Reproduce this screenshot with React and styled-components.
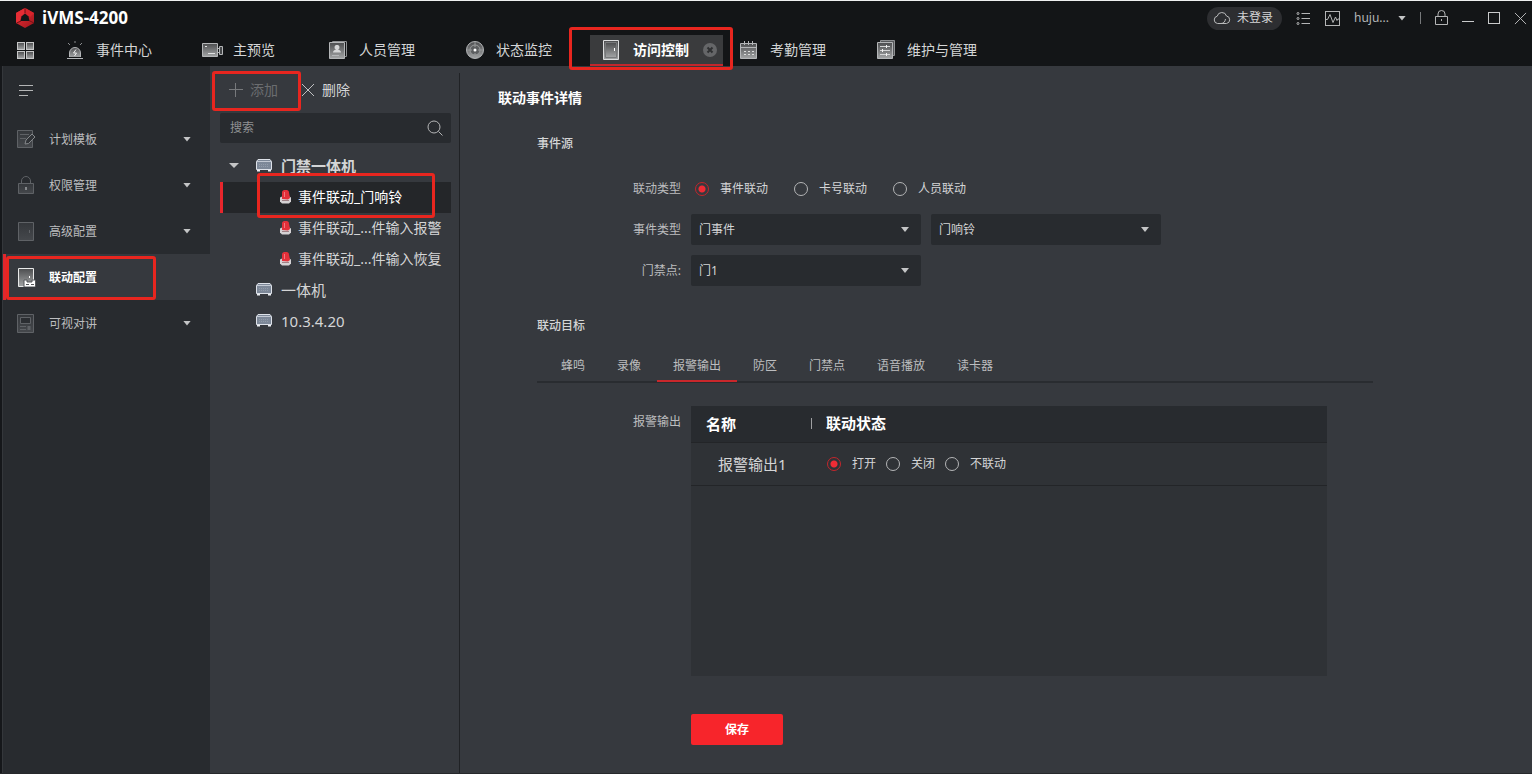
import React, { useState } from 'react'
import styled, { createGlobalStyle, css } from 'styled-components'

const navItems = [
  { label: '事件中心', icon: 'siren' },
  { label: '主预览', icon: 'camera', short: true },
  { label: '人员管理', icon: 'person' },
  { label: '状态监控', icon: 'radar' },
  { label: '访问控制', icon: 'door', active: true },
  { label: '考勤管理', icon: 'calendar' },
  { label: '维护与管理', icon: 'sliders' },
]

const menuItems = [
  { label: '计划模板', icon: 'template', children: true },
  { label: '权限管理', icon: 'padlock', children: true },
  { label: '高级配置', icon: 'panel', children: true },
  { label: '联动配置', icon: 'linkage', active: true },
  { label: '可视对讲', icon: 'intercom', children: true },
]

const treeRows = [
  { label: '门禁一体机', type: 'device', open: true },
  { label: '事件联动_门响铃', type: 'event', active: true },
  { label: '事件联动_...件输入报警', type: 'event' },
  { label: '事件联动_...件输入恢复', type: 'event' },
  { label: '一体机', type: 'device' },
  { label: '10.3.4.20', type: 'device' },
]

const targetTabs = [
  '蜂鸣',
  '录像',
  '报警输出',
  '防区',
  '门禁点',
  '语音播放',
  '读卡器',
]

const App = () => {
  const [linkType, setLinkType] = useState('事件联动')
  const [output, setOutput] = useState('打开')
  const [tab, setTab] = useState('报警输出')

  return (
    <Shell>
      <GlobalStyle />
      <Gradients />
      <Header>
        <TitleBar>
          <Logo />
          <Brand>iVMS-4200</Brand>
          <Tools>
            <LoginPill>
              <CloudIcon />
              未登录
            </LoginPill>
            <ToolButton aria-label="list">
              <ListIcon />
            </ToolButton>
            <ToolButton aria-label="monitor">
              <WaveIcon />
            </ToolButton>
            <UserButton>
              huju...
              <Caret />
            </UserButton>
            <ToolDivider />
            <ToolButton aria-label="lock">
              <LockIcon />
            </ToolButton>
            <ToolButton aria-label="minimize">
              <MinimizeIcon />
            </ToolButton>
            <ToolButton aria-label="maximize">
              <MaximizeIcon />
            </ToolButton>
            <ToolButton aria-label="close">
              <CrossIcon size={13} />
            </ToolButton>
          </Tools>
        </TitleBar>
        <Nav>
          <GridButton aria-label="modules">
            <GridIcon />
          </GridButton>
          {navItems.map(item => (
            <NavItem key={item.label} $active={item.active} $short={item.short}>
              <NavLink href="#" $active={item.active}>
                <NavIcon name={item.icon} />
                {item.label}
              </NavLink>
              {item.active && (
                <>
                  <CloseTab aria-label="close tab">
                    <CloseTabIcon />
                  </CloseTab>
                  <Highlight $top={-8} $left={-21} $right={-10} $bottom={-6} />
                </>
              )}
            </NavItem>
          ))}
        </Nav>
      </Header>

      <Body>
        <Sidebar>
          <Fold aria-label="fold menu">
            <FoldIcon />
          </Fold>
          {menuItems.map(item => (
            <MenuLink href="#" key={item.label} $active={item.active}>
              <MenuIcon name={item.icon} />
              <MenuLabel>{item.label}</MenuLabel>
              {item.children && <Caret />}
              {item.active && (
                <Highlight $top={2} $left={0} $right={54} $bottom={0} />
              )}
            </MenuLink>
          ))}
        </Sidebar>

        <TreePanel>
          <Toolbar>
            <ToolbarButton disabled>
              <PlusIcon />
              添加
              <Highlight $top={-2} $left={-17} $right={-23} $bottom={-4} />
            </ToolbarButton>
            <ToolbarButton>
              <CrossIcon size={14} />
              删除
            </ToolbarButton>
          </Toolbar>
          <Search>
            <SearchInput placeholder="搜索" aria-label="搜索" />
            <SearchIcon />
          </Search>
          <Tree>
            {treeRows.map(row => (
              <TreeRow
                key={row.label}
                $active={row.active}
                $open={row.open}
                $leaf={row.type === 'event'}
              >
                <Arrow $leaf={row.type === 'event'}>
                  {row.open && <Caret $wide />}
                </Arrow>
                {row.type === 'device' ? <DeviceIcon /> : <EventIcon />}
                {row.label}
                {row.active && (
                  <Highlight $top={-9} $left={34} $right={16} $bottom={-5} />
                )}
              </TreeRow>
            ))}
          </Tree>
        </TreePanel>

        <Detail>
          <Title>联动事件详情</Title>
          <Form onSubmit={e => e.preventDefault()}>
            <Heading>事件源</Heading>
            <Fields>
              <Field>
                <Label as="span">联动类型</Label>
                <Radios $inset>
                  {['事件联动', '卡号联动', '人员联动'].map(name => (
                    <RadioLabel key={name}>
                      <Radio
                        name="linkType"
                        checked={linkType === name}
                        onChange={() => setLinkType(name)}
                      />
                      {name}
                    </RadioLabel>
                  ))}
                </Radios>
              </Field>
              <Field>
                <Label htmlFor="eventType">事件类型</Label>
                <Controls>
                  <Dropdown id="eventType" options={['门事件']} />
                  <Dropdown aria-label="事件" options={['门响铃']} />
                </Controls>
              </Field>
              <Field>
                <Label htmlFor="door">门禁点:</Label>
                <Controls>
                  <Dropdown id="door" options={['门1']} />
                </Controls>
              </Field>
            </Fields>

            <Heading $target>联动目标</Heading>
            <Tabs role="tablist">
              {targetTabs.map(name => (
                <Tab
                  type="button"
                  role="tab"
                  key={name}
                  aria-selected={tab === name}
                  $active={tab === name}
                  onClick={() => setTab(name)}
                >
                  {name}
                </Tab>
              ))}
            </Tabs>

            <Field $top>
              <Label as="span">报警输出</Label>
              <TableBox>
                <Table>
                  <thead>
                    <tr>
                      <NameHead>名称</NameHead>
                      <StateHead>
                        <span>联动状态</span>
                      </StateHead>
                    </tr>
                  </thead>
                  <tbody>
                    <tr>
                      <NameCell>报警输出1</NameCell>
                      <StateCell>
                        <Radios>
                          {['打开', '关闭', '不联动'].map(name => (
                            <RadioLabel key={name}>
                              <Radio
                                name="output"
                                checked={output === name}
                                onChange={() => setOutput(name)}
                              />
                              {name}
                            </RadioLabel>
                          ))}
                        </Radios>
                      </StateCell>
                    </tr>
                  </tbody>
                </Table>
              </TableBox>
            </Field>
            <Field>
              <span />
              <Save type="submit">保存</Save>
            </Field>
          </Form>
        </Detail>
      </Body>
    </Shell>
  )
}

export default App

const Dropdown = ({ options, ...rest }) => (
  <SelectBox>
    <Select {...rest}>
      {options.map(option => (
        <option key={option}>{option}</option>
      ))}
    </Select>
    <Caret />
  </SelectBox>
)

/* icons */

const Gradients = () => (
  <HiddenSvg aria-hidden="true">
    <defs>
      <linearGradient id="metal" x1="0" y1="0" x2="0" y2="1">
        <stop offset="0" stopColor="#4c4d4f" />
        <stop offset="1" stopColor="#a3a5a6" />
      </linearGradient>
      <linearGradient id="dim" x1="0" y1="0" x2="0" y2="1">
        <stop offset="0" stopColor="#34373b" />
        <stop offset="1" stopColor="#45484c" />
      </linearGradient>
      <linearGradient id="ruby" x1="0" y1="0" x2="1" y2="1">
        <stop offset="0" stopColor="#ee3038" />
        <stop offset="1" stopColor="#a0161c" />
      </linearGradient>
    </defs>
  </HiddenSvg>
)

const Logo = () => (
  <svg width="20" height="22" viewBox="0 0 20 22">
    <path d="M10 1 19 6v10l-9 5-9-5V6z" fill="url(#ruby)" />
    <path d="M10 1 19 6l-4 4-5-4z" fill="#d9242c" />
    <path d="M1 6l9-5v5l-4 3-1 5-4 2z" fill="#e62d35" />
    <path d="M10 6.500 13.500 9.500 14.500 14H5.500L6.500 9.500z" fill="#141618" />
    <path d="M10 1v5M19 16l-5-2.500M1.500 16l4.500-2" stroke="#6d1216" />
  </svg>
)

const CloudIcon = () => (
  <svg width="18" height="14" viewBox="0 0 18 14" fill="none" stroke="#b9babb">
    <path d="M4.500 12.500a3.700 3.700 0 0 1-.3-7.300A4.800 4.800 0 0 1 13.500 5a3.800 3.800 0 0 1 0 7.500H4.500" />
    <path d="M8 12.500c3 0 4-2 4.500-4.500" />
  </svg>
)

const ListIcon = () => (
  <svg width="15" height="15" viewBox="0 0 15 15" fill="none" stroke="#b4b5b6">
    <circle cx="2" cy="2.500" r="1" />
    <circle cx="2" cy="7.500" r="1" />
    <circle cx="2" cy="12.500" r="1" />
    <path d="M5.500 2.500H14M5.500 7.500H14M5.500 12.500H14" />
  </svg>
)

const WaveIcon = () => (
  <svg width="15" height="15" viewBox="0 0 15 15" fill="none" stroke="#b4b5b6">
    <rect x=".5" y=".5" width="14" height="14" />
    <path d="M1 8.500h1.500L5 3.500l3 8 2.500-5.500 1.500 3.500 1-1.500H14" />
  </svg>
)

const LockIcon = () => (
  <svg width="13" height="16" viewBox="0 0 13 16" fill="none" stroke="#b4b5b6">
    <path d="M.5 6.500h12v8H.5zM3 6.500V4a3.500 3.500 0 0 1 7 0v2.500M6.500 9v2" />
  </svg>
)

const MinimizeIcon = () => (
  <svg width="12" height="12" viewBox="0 0 12 12" stroke="#c9cacb">
    <path d="M0 9.500h12" />
  </svg>
)

const MaximizeIcon = () => (
  <svg width="12" height="12" viewBox="0 0 12 12" fill="none" stroke="#c9cacb">
    <rect x=".5" y=".5" width="11" height="11" />
  </svg>
)

const CrossIcon = ({ size }) => (
  <svg width={size} height={size} viewBox="0 0 14 14" stroke="#c0c1c2">
    <path d="M1 1l12 12M13 1 1 13" />
  </svg>
)

const PlusIcon = () => (
  <svg width="14" height="14" viewBox="0 0 14 14" stroke="#77797c">
    <path d="M0 6.500h14M6.500 0v14" />
  </svg>
)

const FoldIcon = () => (
  <svg width="15" height="12" viewBox="0 0 15 12" stroke="#b4b5b6">
    <path d="M0 .5h14M0 5.500h14M0 10.500h9" />
  </svg>
)

const SearchIcon = () => (
  <svg width="16" height="16" viewBox="0 0 16 16" fill="none" stroke="#b4b5b6">
    <circle cx="7" cy="7" r="6" />
    <path d="M11.500 11.500 15.500 15.500" />
  </svg>
)

const GridIcon = () => (
  <svg width="18" height="18" viewBox="0 0 18 18" fill="url(#metal)" stroke="#c6c7c8">
    <rect x="1.500" y=".5" width="7" height="7" />
    <rect x="10.500" y=".5" width="7" height="7" />
    <rect x="1.500" y="9.500" width="7" height="7" />
    <rect x="10.500" y="9.500" width="7" height="7" />
  </svg>
)

const CloseTabIcon = () => (
  <svg width="14" height="14" viewBox="0 0 14 14">
    <circle cx="7" cy="7" r="7" fill="#656668" />
    <path d="M4.500 4.500l5 5M9.500 4.500l-5 5" stroke="#2f3032" strokeWidth="2" />
  </svg>
)

const DeviceIcon = () => (
  <svg width="16" height="13" viewBox="0 0 16 13">
    <path d="M2 .5h12l1.500 2v8H.5v-8z" fill="#7d8898" stroke="#dde1e8" />
    <path d="M1 2.500h14" stroke="#c3c9d3" />
    <path d="M3 5.500h10M3 7.500h10" stroke="#929caa" strokeDasharray="1 1" />
    <path d="M1 11h3v1.500H1zM12 11h3v1.500h-3z" fill="#eceff3" />
  </svg>
)

const EventIcon = () => (
  <svg width="13" height="15" viewBox="0 0 13 15">
    <path d="M1 8.500 3 7.500h7l2 1v4L10 14.500H3l-2-2z" fill="#d5d2d4" />
    <path d="M3 10V3.500C3 1.500 4.500 1 6.500 1S10 1.500 10 3.500L11 9 9 10.500z" fill="#e2303a" />
    <path d="M5.500 8V3" stroke="#f0777d" />
    <path d="M3 11.500h7" stroke="#9d7f84" />
  </svg>
)

const navShapes = {
  siren: (
    <>
      <path d="M4.500 17v-4a5.500 5.500 0 0 1 11 0v4" />
      <path d="M2 18.500h16" />
      <path d="M10 1v2M3 3l2 2M17 3l-2 2" fill="none" stroke="#8a8c8e" />
      <path d="M11 9.500 8.500 13h3L9.500 16" fill="none" stroke="#ececec" />
    </>
  ),
  camera: (
    <>
      <path d="M.5 3.500h15v13H.5z" />
      <path d="M17.500 6.500h3v8h-3z" fill="#46484a" />
      <path d="M15.500 8.500h2M15.500 12.500h2" />
      <path d="M3 6.500h2M6 13.500h7" fill="none" stroke="#e0e1e2" />
    </>
  ),
  person: (
    <>
      <path d="M4.500 2.500v-1h14v15h-2" fill="none" stroke="#8d8f91" />
      <path d="M1.500 2.500h15v16h-15z" />
      <path d="M9 5a2 2.300 0 0 1 1 4.500c2 .5 3 1.500 3 3H5c0-1.500 1-2.500 3-3A2 2.300 0 0 1 9 5z" fill="#d5d6d7" stroke="none" />
      <path d="M4 15.500h7" />
    </>
  ),
  radar: (
    <>
      <circle cx="10" cy="10" r="8.500" />
      <circle cx="10" cy="10" r="5" fill="#5c5e60" stroke="#97999a" />
      <path d="M10 1.500V7M10 13v5.500M1.500 10H7M13 10h5.500" stroke="#97999a" />
      <circle cx="10" cy="10" r="1.500" fill="#fff" stroke="none" />
    </>
  ),
  door: (
    <>
      <path d="M1.500.5h15v19h-15z" stroke="#dcddde" />
      <path d="M3.500 2.500h11v15h-11z" stroke="#77797b" />
      <path d="M12.500 8v3" stroke="#fff" />
    </>
  ),
  calendar: (
    <>
      <path d="M1.500 3.500h16v15h-16z" />
      <path d="M1.500 7.500h16M5.500 1v4M9.500 1v4M13.500 1v4" />
      <path d="M5 11.500h10M5 14.500h10" stroke="#dcdddd" strokeDasharray="2 2" />
    </>
  ),
  sliders: (
    <>
      <path d="M4.500 2.500v-2h14v15h-2" fill="#55575a" stroke="#8d8f91" />
      <path d="M1.500 2.500h15v16h-15z" />
      <path d="M4 6.500h10M4 10.500h10M4 14.500h10" stroke="#d3d4d5" />
      <path d="M10.500 5v3M6.500 9v3M10.500 13v3" stroke="#f2f2f2" />
    </>
  ),
}

const NavIcon = ({ name }) => (
  <svg
    width="20"
    height="20"
    viewBox="0 0 20 20"
    overflow="visible"
    fill="url(#metal)"
    stroke="#b4b6b8"
  >
    {navShapes[name]}
  </svg>
)

const menuShapes = {
  template: (
    <>
      <path d="M.5.5h15v17H.5z" />
      <path d="M3 4.500h9M3 8.500h6" />
      <path d="M8 14l1-4 6-6 3 3-6.500 6.500z" fill="#303337" stroke="#85888b" />
    </>
  ),
  padlock: (
    <>
      <path d="M1.500 7.500h15v10h-15z" />
      <path d="M4.500 7.500V5a4.500 4.500 0 0 1 9 0v2.500" fill="none" />
      <path d="M9 11v3" stroke="#85888b" strokeWidth="2" />
    </>
  ),
  panel: (
    <>
      <path d="M1.500.5h15v18h-15z" />
      <path d="M12.500 8v3" />
    </>
  ),
  linkage: (
    <>
      <path d="M1.500.5h15v18h-15z" fill="url(#metal)" stroke="#e9eaea" />
      <path d="M12.500 8v2" stroke="#fff" />
      <path d="M7 19v-7h3v2h5v-2h3.500v7z" fill="#fff" stroke="#55575a" />
      <path d="M9 16.500h3M14 16.500h3" stroke="#55575a" />
    </>
  ),
  intercom: (
    <>
      <path d="M.5.500h16v18H.5z" />
      <path d="M3.500 3.500h10v6h-10z" fill="#2b2e32" />
      <path d="M3 12.500h6M3 15.500h6" />
      <path d="M12 12v4" strokeWidth="3" />
    </>
  ),
}

const MenuIcon = ({ name }) => (
  <svg width="19" height="19" viewBox="0 0 19 19" fill="url(#dim)" stroke="#5f6266">
    {menuShapes[name]}
  </svg>
)

/* styles */

const GlobalStyle = createGlobalStyle`
  *, *::before, *::after {
    box-sizing: border-box;
  }

  body {
    margin: 0;
    background: #36393e;
    color: #d4d5d6;
    font: 12px/20px "Noto Sans", "Noto Sans CJK SC", sans-serif;
  }

  button, input, select {
    font: inherit;
    color: inherit;
  }

  button {
    padding: 0;
    border: 0;
    background: none;
  }

  a {
    color: inherit;
    text-decoration: none;
  }

  svg {
    display: block;
    flex: none;
  }
`

const HiddenSvg = styled.svg`
  position: absolute;
  width: 0;
  height: 0;
`

const Shell = styled.div`
  display: flex;
  flex-direction: column;
  min-height: 100vh;
  border-top: 1px solid #eef0f0;
  border-bottom: 1px solid #26282b;
`

// red frame drawn round the part that the guide points at
const Highlight = styled.span`
  position: absolute;
  z-index: 2;
  top: ${p => p.$top}px;
  right: ${p => p.$right}px;
  bottom: ${p => p.$bottom}px;
  left: ${p => p.$left}px;
  border: 3px solid #e8261f;
  border-radius: 3px;
  pointer-events: none;
`

const Caret = styled.span`
  flex: none;
  width: ${p => (p.$wide ? 10 : 8)}px;
  height: 5px;
  background: #c4c5c6;
  clip-path: polygon(0 0, 100% 0, 50% 100%);
`

const Header = styled.header`
  background: #131517;
`

const TitleBar = styled.div`
  display: flex;
  align-items: center;
  height: 34px;
  padding: 0 5px 0 15px;
`

const Brand = styled.h1`
  margin: 0 0 0 7px;
  color: #fff;
  font: 700 17px/22px 'Open Sans', sans-serif;
`

const Tools = styled.div`
  display: flex;
  align-items: center;
  gap: 14px;
  margin-left: auto;
`

const LoginPill = styled.button`
  display: flex;
  align-items: center;
  gap: 6px;
  height: 23px;
  padding: 0 9px 0 6px;
  border-radius: 12px;
  background: #2d2e31;
`

const ToolButton = styled.button`
  display: block;
`

const UserButton = styled.button`
  display: flex;
  align-items: center;
  gap: 9px;
  color: #b4b5b6;
`

const ToolDivider = styled.span`
  width: 1px;
  height: 12px;
  background: #77797b;
`

const Nav = styled.nav`
  display: flex;
  gap: 4px;
  height: 31px;
  padding-left: 16px;
`

const GridButton = styled.button`
  width: 33px;
`

const NavItem = styled.div`
  position: relative;
  display: flex;
  align-items: center;
  justify-content: space-between;
  min-width: ${p => (p.$short ? 122 : 133)}px;
  padding: 0 6px 0 12px;
  border-bottom: 2px solid transparent;

  ${p =>
    p.$active &&
    css`
      border-color: #c3262c;
      background: #3a3b3d;
    `}
`

const NavLink = styled.a`
  display: flex;
  align-items: center;
  gap: 11px;
  font-size: 14px;
  font-weight: ${p => (p.$active ? 600 : 400)};
  color: ${p => (p.$active ? '#fff' : '#d4d5d6')};
  white-space: nowrap;
`

const CloseTab = styled.button`
  flex: none;
`

const Body = styled.div`
  display: grid;
  flex: 1;
  grid-template-columns: 208px 250px 1fr;
  border-left: 2px solid #15171a;
`

const Sidebar = styled.aside`
  border-left: 1px solid #34373b;
  background: #282b2f;
`

const Fold = styled.button`
  display: flex;
  align-items: center;
  height: 50px;
  padding-left: 16px;
`

const MenuLink = styled.a`
  position: relative;
  display: flex;
  align-items: center;
  gap: 13px;
  height: 46px;
  padding: 0 19px 0 11px;
  border-left: 3px solid ${p => (p.$active ? '#e0272d' : 'transparent')};
  background: ${p => (p.$active ? '#36393e' : 'none')};
  color: ${p => (p.$active ? '#fff' : '#bcbdbf')};
  font-weight: ${p => (p.$active ? 700 : 400)};
`

const MenuLabel = styled.span`
  flex: 1;
  padding-top: 2px;
`

const TreePanel = styled.section`
  margin-top: 7px;
  padding: 0 8px 0 10px;
  border-right: 1px solid #202225;
`

const Toolbar = styled.div`
  display: flex;
  gap: 23px;
  height: 34px;
  margin-bottom: 6px;
  padding-left: 9px;
`

const ToolbarButton = styled.button`
  position: relative;
  display: flex;
  align-items: center;
  gap: 7px;
  color: #d4d5d6;
  font-size: 14px;

  &:disabled {
    color: #6b6d70;
  }
`

const Search = styled.div`
  display: flex;
  align-items: center;
  height: 30px;
  margin-bottom: 8px;
  padding: 0 8px 0 10px;
  border-radius: 2px;
  background: #282b2f;
`

const SearchInput = styled.input`
  flex: 1;
  min-width: 0;
  padding: 0;
  border: 0;
  outline: 0;
  background: none;

  &::placeholder {
    color: #8f9193;
  }
`

const Tree = styled.ul`
  margin: 0;
  padding: 0;
  list-style: none;
`

const TreeRow = styled.li`
  position: relative;
  display: flex;
  align-items: center;
  gap: ${p => (p.$leaf ? 6 : 9)}px;
  height: 31px;
  padding-bottom: 2px;
  border-left: 3px solid ${p => (p.$active ? '#e8262c' : 'transparent')};
  background: ${p => (p.$active ? '#242629' : 'none')};
  color: ${p => (p.$active ? '#fff' : '#d4d5d6')};
  font-size: ${p => (p.$leaf ? 14 : 15)}px;
  font-weight: ${p => (p.$open ? 600 : 400)};
  white-space: nowrap;
`

const Arrow = styled.span`
  display: flex;
  flex: none;
  width: ${p => (p.$leaf ? 50 : 24)}px;
  padding-left: 6px;
`

const Detail = styled.main`
  padding: 21px 38px 28px;
`

const Title = styled.h2`
  margin: 0;
  color: #fff;
  font-size: 14px;
  font-weight: 600;
  line-height: 22px;
`

const Form = styled.form`
  max-width: 875px;
  padding: 25px 0 0 39px;
`

const Heading = styled.h3`
  margin: ${p => (p.$target ? '30px 0 15px' : '0 0 19px')};
  font-size: 12px;
  font-weight: 500;
  line-height: 20px;
`

const Fields = styled.div`
  display: grid;
  gap: 10px;
`

const Field = styled.div`
  display: grid;
  grid-template-columns: 144px 1fr;
  column-gap: 10px;
  align-items: ${p => (p.$top ? 'start' : 'center')};
  min-height: 31px;
  margin: ${p => (p.$top ? '23px 0 38px' : 0)};
`

const Label = styled.label`
  padding: 6px 0;
  color: #bcbdbf;
  line-height: 19px;
  text-align: right;
`

const Radios = styled.div`
  display: flex;
  gap: ${p => (p.$inset ? 26 : 10)}px;
  padding-left: ${p => (p.$inset ? 4 : 0)}px;
`

const RadioLabel = styled.label`
  display: flex;
  align-items: center;
  gap: 11px;
`

const Radio = styled.input.attrs({ type: 'radio' })`
  appearance: none;
  width: 14px;
  height: 14px;
  margin: 0;
  border: 1px solid #b4b5b6;
  border-radius: 50%;

  &:checked {
    border-color: #c3262c;
    background: radial-gradient(circle, #ee2c35 3px, transparent 4px);
  }
`

const Controls = styled.div`
  display: flex;
  gap: 10px;
`

const SelectBox = styled.div`
  display: grid;
  flex: 0 1 230px;
  align-items: center;

  > * {
    grid-area: 1 / 1;
  }

  ${Caret} {
    justify-self: end;
    margin-right: 12px;
    pointer-events: none;
  }
`

const Select = styled.select`
  appearance: none;
  width: 100%;
  height: 31px;
  padding: 0 28px 0 8px;
  border: 0;
  border-radius: 2px;
  background: #282b2f;
`

const Tabs = styled.div`
  display: flex;
  padding-left: 8px;
  border-bottom: 2px solid #292c30;
`

const Tab = styled.button`
  height: 31px;
  margin-bottom: -1px;
  padding: 0 16px;
  border-bottom: 2px solid ${p => (p.$active ? '#c9272b' : 'transparent')};
  color: #bcbdbf;
`

const TableBox = styled.div`
  min-height: 270px;
  margin-right: 46px;
  background: #2f3236;
`

const Table = styled.table`
  width: 100%;
  border-collapse: collapse;
  table-layout: fixed;
  font-size: 15px;
  text-align: left;

  tr {
    border-bottom: 1px solid #232528;
  }

  th {
    height: 36px;
    background: #282b2f;
    color: #fff;
    font-weight: 600;
  }

  td {
    height: 43px;
  }
`

const NameHead = styled.th`
  width: 120px;
  padding: 0 0 0 15px;
`

const StateHead = styled.th`
  padding: 0;

  span {
    display: block;
    padding-left: 14px;
    border-left: 1px solid #9fa0a2;
    line-height: 11px;
  }
`

const NameCell = styled.td`
  padding: 0 0 0 27px;
  white-space: nowrap;
`

const StateCell = styled.td`
  padding: 0 0 0 16px;
  font-size: 12px;
`

const Save = styled.button`
  width: 92px;
  height: 31px;
  border-radius: 2px;
  background: #f7252b;
  color: #fff;
  font-weight: 700;
`
